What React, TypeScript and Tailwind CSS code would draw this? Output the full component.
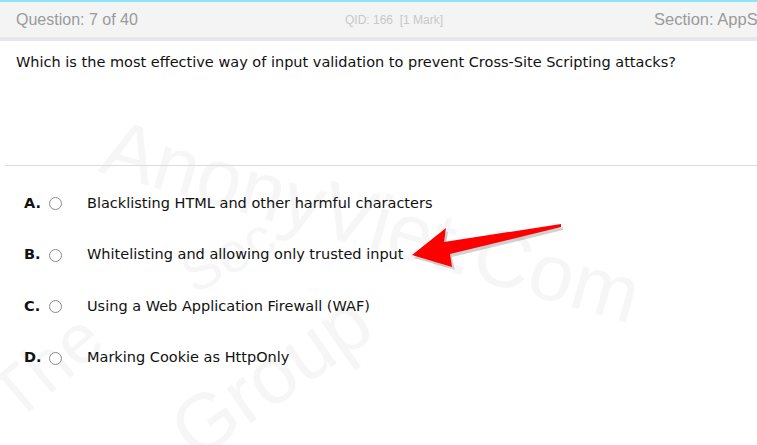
import React from "react";

const OPTIONS = [
  { key: "A.", text: "Blacklisting HTML and other harmful characters" },
  { key: "B.", text: "Whitelisting and allowing only trusted input" },
  { key: "C.", text: "Using a Web Application Firewall (WAF)" },
  { key: "D.", text: "Marking Cookie as HttpOnly" },
];

function Arrow() {
  return (
    <svg
      className="pointer-events-none absolute left-0 top-0"
      width="757"
      height="445"
      viewBox="0 0 757 445"
    >
      {/* sombra */}
      <polygon
        points="414,258 448,231 446,245 563,227 563,230 452,257 455,270"
        fill="#000"
        opacity="0.18"
      />
      <polygon
        points="412,255 446,228 444,242 561,224 561,227 450,254 452,267"
        fill="#ff0000"
      />
    </svg>
  );
}

function Watermark() {
  return (
    <div className="pointer-events-none absolute inset-0 overflow-hidden font-['Liberation_Sans',sans-serif] text-[#f6f6f6]">
      <div className="absolute left-[105px] top-[105px] origin-left rotate-[16deg] text-[80px] leading-none">
        AnonyViet.Com
      </div>
      <div className="absolute left-[185px] top-[250px] origin-left rotate-[-28deg] text-[56px] leading-none">
        Sec
      </div>
      <div className="absolute left-[0px] top-[370px] origin-left rotate-[-40deg] text-[70px] leading-none">
        The
      </div>
      <div className="absolute left-[180px] top-[400px] origin-left rotate-[-35deg] text-[80px] leading-none">
        Group
      </div>
    </div>
  );
}

export default function App() {
  return (
    <div className="relative h-[445px] w-[757px] overflow-hidden bg-white">
      <Watermark />

      <div className="relative">
        {/* Barra superior */}
        <div className="h-[2px] bg-[#8fe3fb]" />
        <div className="flex h-[35px] items-center whitespace-nowrap bg-[#f4f4f4] pl-4 font-['Liberation_Sans',sans-serif]">
          <span className="w-[329px] text-[16px] text-[#9a9a9a]">
            Question: 7 of 40
          </span>
          <span className="text-[12px] text-[#c8c8c8]">
            QID: 166&nbsp; [1 Mark]
          </span>
          <span className="ml-auto w-[103px] overflow-hidden text-[16.5px] text-[#9a9a9a]">
            Section: AppSec
          </span>
        </div>
        <div className="h-[4px] bg-[#e6e6ec]" />

        {/* Pregunta */}
        <p className="px-4 pt-[11px] font-['DejaVu_Sans',sans-serif] text-[14.5px] text-[#111]">
          Which is the most effective way of input validation to prevent
          Cross-Site Scripting attacks?
        </p>

        <div className="ml-[5px] mt-[91px] h-px bg-[#dcdcdc]" />

        {/* Opciones */}
        <div className="flex flex-col gap-[33.5px] pl-6 pt-[29px] font-['DejaVu_Sans',sans-serif] text-[14.5px] text-[#111]">
          {OPTIONS.map((o) => (
            <div key={o.key} className="flex h-[18px] items-center">
              <span className="w-[25px] font-bold">{o.key}</span>
              <span className="h-[13px] w-[13px] rounded-full border border-[#8a8a8a] bg-white" />
              <span className="ml-[25px]">{o.text}</span>
            </div>
          ))}
        </div>
      </div>

      <Arrow />
    </div>
  );
}
